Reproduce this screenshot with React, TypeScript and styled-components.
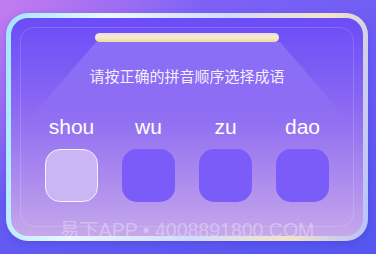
import styled, { createGlobalStyle } from 'styled-components';

const GlobalStyle = createGlobalStyle`
  html, body {
    margin: 0;
    padding: 0;
  }
  body {
    font-family: "Liberation Sans", Arial, "Noto Sans CJK SC", sans-serif;
  }
`;

const Page = styled.div`
  width: 376px;
  height: 254px;
  box-sizing: border-box;
  padding: 13px 8px 13px 6px;
  overflow: hidden;
  background:
    radial-gradient(circle at 0% 0%, rgba(200, 126, 240, 0.9) 0%, rgba(200, 126, 240, 0) 45%),
    linear-gradient(160deg, #8d66f3 0%, #6a5cf5 45%, #5456f0 100%);
`;

const Frame = styled.div`
  height: 228px;
  box-sizing: border-box;
  padding: 5px;
  border-radius: 22px;
  background: linear-gradient(100deg, #9fe6ff 0%, #eaf8ff 25%, #cfdcff 55%, #f3e4c6 80%, #b6c2ff 100%);
  box-shadow: 0 2px 6px rgba(60, 40, 180, 0.25);
`;

const Panel = styled.div`
  position: relative;
  height: 100%;
  overflow: hidden;
  border-radius: 17px;
  background: linear-gradient(180deg, #6b4cf7 0%, #8a68f3 40%, #ad8cee 75%, #c6a8ea 100%);
  display: flex;
  flex-direction: column;
  align-items: center;
  padding-top: 15px;
  box-sizing: border-box;

  & > * {
    flex-shrink: 0;
  }

  &::after {
    content: '';
    position: absolute;
    inset: 9px;
    border-radius: 14px;
    border: 1.5px solid rgba(255, 255, 255, 0.16);
    pointer-events: none;
  }
`;

const Beam = styled.div`
  position: absolute;
  top: 24px;
  left: 0;
  right: 0;
  height: 80px;
  clip-path: polygon(85px 0, 269px 0, 338px 100%, 16px 100%);
  background: linear-gradient(180deg, rgba(255, 255, 255, 0.16) 0%, rgba(255, 255, 255, 0.05) 70%, rgba(255, 255, 255, 0) 100%);
  pointer-events: none;
`;

const LightBar = styled.div`
  width: 184px;
  height: 9px;
  border-radius: 5px;
  background: linear-gradient(180deg, #e6dcf2 0%, #f7eccb 45%, #efd9a2 100%);
  position: relative;
  z-index: 1;
`;

const Title = styled.div`
  margin-top: 24px;
  font-size: 15px;
  line-height: 20px;
  color: rgba(255, 255, 255, 0.92);
  font-family: "Noto Sans CJK SC", sans-serif;
  position: relative;
  z-index: 1;
`;

const Choices = styled.div`
  margin-top: 29px;
  display: grid;
  grid-template-columns: repeat(4, 53px);
  column-gap: 24px;
  row-gap: 10px;
  position: relative;
  z-index: 1;
`;

const Syllable = styled.div`
  text-align: center;
  font-size: 21px;
  line-height: 24px;
  color: #ffffff;
  white-space: nowrap;
  display: flex;
  justify-content: center;
`;

const Slot = styled.div<{ $active?: boolean }>`
  width: 53px;
  height: 53px;
  box-sizing: border-box;
  border-radius: 15px;
  background: ${(p) => (p.$active ? '#c9b6f3' : '#7b5cf9')};
  border: ${(p) => (p.$active ? '1.5px solid #f6f0ff' : 'none')};
`;

const Watermark = styled.div`
  margin-top: 17px;
  font-size: 19.5px;
  line-height: 22px;
  color: rgba(255, 255, 255, 0.32);
  white-space: nowrap;
  font-family: "Liberation Sans", "Noto Sans CJK SC", sans-serif;
`;

const syllables = ['shou', 'wu', 'zu', 'dao'];

export default function App() {
  return (
    <>
      <GlobalStyle />
      <Page>
        <Frame>
          <Panel>
            <Beam />
            <LightBar />
            <Title>请按正确的拼音顺序选择成语</Title>
            <Choices>
              {syllables.map((s) => (
                <Syllable key={s}>{s}</Syllable>
              ))}
              {syllables.map((s, i) => (
                <Slot key={s} $active={i === 0} />
              ))}
            </Choices>
            <Watermark>易下APP • 4008891800.COM</Watermark>
          </Panel>
        </Frame>
      </Page>
    </>
  );
}
